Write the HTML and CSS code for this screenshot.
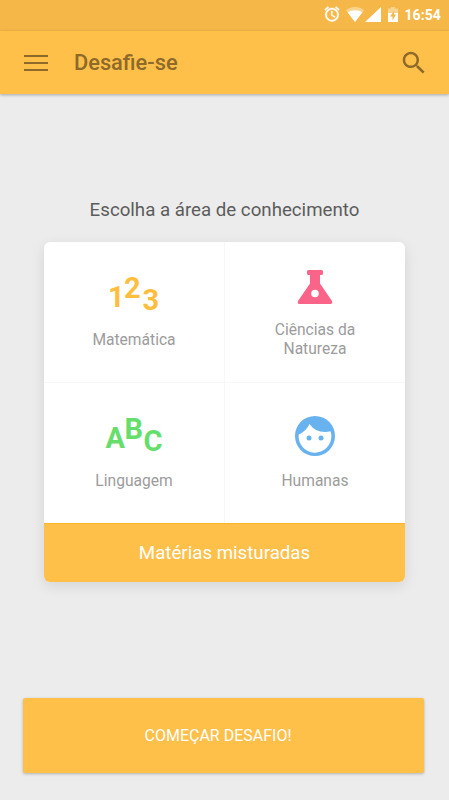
FILE: index.html
```html
<!DOCTYPE html>
<html lang="pt-BR">
<head>
    <meta charset="UTF-8">
    <meta name="viewport" content="width=device-width, initial-scale=1.0">
    <title>Desafie-se</title>
    <link rel="stylesheet" href="styles.css">
</head>
<body>

    <div class="status-bar">
        <svg class="alarm" width="18" height="18" viewBox="0 0 24 24"><path d="M22 5.720l-4.600-3.860-1.290 1.530 4.600 3.860L22 5.720zM7.880 3.390L6.600 1.860 2 5.710l1.290 1.530 4.590-3.850zM12.500 8H11v6l4.750 2.850.75-1.230-4-2.370V8zM12 4c-4.970 0-9 4.030-9 9s4.020 9 9 9 9-4.030 9-9-4.030-9-9-9zm0 16c-3.870 0-7-3.130-7-7s3.130-7 7-7 7 3.130 7 7-3.130 7-7 7z"/></svg>
        <svg class="wifi" width="18" height="15" viewBox="0 0 18 15"><path opacity=".4" d="M9 15L0 3.200C5-1 13-1 18 3.200z"/><path d="M9 15L1.700 5.500C6 2.500 12 2.500 16.300 5.500z"/></svg>
        <svg class="signal" width="16" height="15" viewBox="0 0 16 15"><path d="M0 15L16 0v15z"/></svg>
        <svg class="battery" width="10" height="15" viewBox="0 0 10 15"><path opacity=".4" d="M3 0h4v1.500h3V6H0V1.500h3z"/><path d="M0 6h10v9H0z"/><path class="bolt" d="M6 4L2 9.500h2.500v4L8 7.500H6z"/></svg>
        <span class="clock">16:54</span>
    </div>

    <header class="app-bar">
        <svg class="menu-icon" width="24" height="16" viewBox="0 0 24 16"><path d="M0 1h24M0 8h24M0 15h24"/></svg>
        <h1>Desafie-se</h1>
        <svg class="search-icon" width="30" height="30" viewBox="0 0 24 24"><path d="M15.500 14h-.79l-.28-.27C15.410 12.590 16 11.110 16 9.500 16 5.910 13.090 3 9.500 3S3 5.910 3 9.500 5.910 16 9.500 16c1.610 0 3.090-.59 4.230-1.570l.27.28v.79l5 4.990L20.490 19l-4.990-5zm-6 0C7.010 14 5 11.990 5 9.500S7.010 5 9.500 5 14 7.010 14 9.500 11.990 14 9.500 14z"/></svg>
    </header>

    <main>
        <h2>Escolha a área de conhecimento</h2>

        <div class="card">
            <div class="subjects">
                <div class="subject math">
                    <svg width="60" height="40" viewBox="0 0 60 40">
                        <text x="4" y="35">1</text>
                        <text x="20" y="26">2</text>
                        <text x="38.500" y="38">3</text>
                    </svg>
                    <p>Matemática</p>
                </div>
                <div class="subject science">
                    <svg width="36" height="34" viewBox="0 0 36 34">
                        <path fill-rule="evenodd" d="M11.500 0h13q1.500 0 1.500 1.500v2q0 1.500-1.500 1.500H23v8.500l12 17.500q1 3-1.500 3h-31q-2.500 0-1.500-3L13 13.500V5h-1.500Q10 5 10 3.500v-2Q10 0 11.500 0zM18 19.700a3.800 3.800 0 1 0 0 7.600 3.800 3.800 0 0 0 0-7.600z"/>
                    </svg>
                    <p>Ciências da<br>Natureza</p>
                </div>
                <div class="subject language">
                    <svg width="60" height="40" viewBox="0 0 60 40">
                        <text x="1.500" y="35">A</text>
                        <text x="20.500" y="26">B</text>
                        <text x="39.500" y="38">C</text>
                    </svg>
                    <p>Linguagem</p>
                </div>
                <div class="subject humanities">
                    <svg width="40" height="40" viewBox="0 0 40 40">
                        <path fill-rule="evenodd" d="M20 0a20 20 0 1 0 0 40 20 20 0 0 0 0-40zM14.500 8Q20 16 30 16q3 0 5.500-.8Q36.400 18 36.400 20A16.400 16.400 0 1 1 3.700 18.500Q11.500 15 14.500 8z"/>
                        <circle cx="14" cy="22" r="2.500"/>
                        <circle cx="26" cy="22" r="2.500"/>
                    </svg>
                    <p>Humanas</p>
                </div>
            </div>
            <button class="mixed">Matérias misturadas</button>
        </div>

        <button class="start">COMEÇAR DESAFIO!</button>
    </main>

</body>
</html>
```
FILE: styles.css
```css
body {
    font-family: Roboto, sans-serif;
    display: flex;
    flex-direction: column;
    height: 800px;
    margin: 0;
    background: #ececec;
}

svg {
    display: block;
    flex-shrink: 0;
    overflow: visible;
}

button {
    border: none;
    padding: 0;
    font-family: inherit;
    color: #fff;
    background: #ffc04a;
    cursor: pointer;
}

.status-bar {
    display: flex;
    justify-content: flex-end;
    height: 31px;
    box-sizing: border-box;
    padding: 7px 8px 0 0;
    background: #f5b748;
    color: #fff;
    fill: #fff;
}

.alarm {
    margin: -2px 5px 0 0;
    stroke: #fff;
    stroke-width: 0.5;
}

.wifi {
    margin-right: 1px;
}

.signal {
    margin-right: 7px;
}

.battery {
    margin-right: 6px;
}

.battery .bolt {
    fill: #f5b748;
}

.clock {
    font-size: 14px;
    font-weight: 700;
    letter-spacing: 0.1px;
    line-height: 16px;
}

.app-bar {
    display: flex;
    align-items: center;
    height: 63px;
    box-sizing: border-box;
    padding: 0 20px 0 24px;
    background: #ffc04a;
    box-shadow: 0 1px 3px rgba(0, 0, 0, 0.3);
}

.menu-icon {
    stroke: #8d6a29;
    stroke-width: 2;
}

.app-bar h1 {
    flex: 1;
    margin: 0 0 0 26px;
    font-size: 21.8px;
    font-weight: 500;
    color: #8d6a29;
}

.search-icon {
    fill: #8d6a29;
}

main {
    flex: 1;
    display: flex;
    flex-direction: column;
    align-items: center;
}

h2 {
    margin: 104px 0 20px;
    font-size: 18.7px;
    font-weight: 400;
    line-height: 24px;
    color: #5c5c5c;
}

.card {
    width: 361px;
    border-radius: 6px;
    overflow: hidden;
    background: #fff;
    box-shadow: 0 4px 14px rgba(0, 0, 0, 0.1);
}

.subjects {
    display: grid;
    grid-template-columns: 181px 180px;
    grid-template-rows: 141px 140px;
}

.subject {
    display: flex;
    flex-direction: column;
    align-items: center;
    box-sizing: border-box;
    padding-top: 30px;
}

.subject:nth-child(odd) {
    border-right: 1px solid #f7f7f7;
}

.subject:nth-child(-n+2) {
    border-bottom: 1px solid #f7f7f7;
}

.subject text {
    font-size: 29px;
    font-weight: 700;
}

.subject p {
    margin: 19px 0 0;
    font-size: 15.6px;
    line-height: 19px;
    text-align: center;
    color: #9c9c9c;
}

.math {
    fill: #ffbe3d;
}

.science {
    padding-top: 28px;
    fill: #fa6488;
}

.science p {
    margin-top: 17px;
}

.language {
    fill: #66de6b;
}

.humanities {
    padding-top: 33px;
    fill: #68b2f0;
}

.humanities p {
    margin-top: 16px;
}

.mixed {
    display: block;
    width: 100%;
    height: 59px;
    border-top: 1px solid #fab52f;
    padding-bottom: 1px;
    font-size: 18.7px;
}

.start {
    width: 401px;
    height: 75px;
    margin: 116px 2px 0 0;
    border-radius: 2px;
    padding-right: 11px;
    font-size: 16px;
    box-shadow: 0 1px 3px rgba(0, 0, 0, 0.25);
}
```
